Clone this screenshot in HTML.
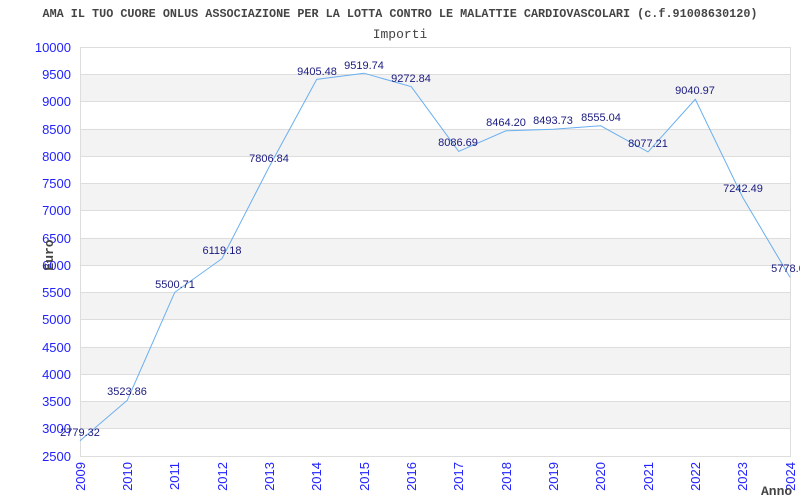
<!DOCTYPE html>
<html><head><meta charset="utf-8"><style>
html,body{margin:0;padding:0;background:#fff;}
svg{display:block;}
</style></head><body>
<svg width="800" height="500" xmlns="http://www.w3.org/2000/svg">
<rect width="800" height="500" fill="#fff"/>
<text x="400" y="17" text-anchor="middle" font-family="Liberation Mono, monospace" font-size="11.8" font-weight="bold" fill="#444">AMA IL TUO CUORE ONLUS ASSOCIAZIONE PER LA LOTTA CONTRO LE MALATTIE CARDIOVASCOLARI (c.f.91008630120)</text>
<text x="400" y="38" text-anchor="middle" font-family="Liberation Mono, monospace" font-size="13" fill="#444">Importi</text>
<g fill="#f3f3f3">
<rect x="81" y="74.3" width="709" height="27.3"/>
<rect x="81" y="128.9" width="709" height="27.3"/>
<rect x="81" y="183.4" width="709" height="27.3"/>
<rect x="81" y="237.9" width="709" height="27.3"/>
<rect x="81" y="292.4" width="709" height="27.3"/>
<rect x="81" y="346.9" width="709" height="27.3"/>
<rect x="81" y="401.5" width="709" height="27.3"/>
</g>
<g stroke="#ddd" stroke-width="1">
<line x1="81" x2="790" y1="47.5" y2="47.5"/><line x1="81" x2="790" y1="74.5" y2="74.5"/><line x1="81" x2="790" y1="101.5" y2="101.5"/><line x1="81" x2="790" y1="129.5" y2="129.5"/><line x1="81" x2="790" y1="156.5" y2="156.5"/><line x1="81" x2="790" y1="183.5" y2="183.5"/><line x1="81" x2="790" y1="210.5" y2="210.5"/><line x1="81" x2="790" y1="238.5" y2="238.5"/><line x1="81" x2="790" y1="265.5" y2="265.5"/><line x1="81" x2="790" y1="292.5" y2="292.5"/><line x1="81" x2="790" y1="319.5" y2="319.5"/><line x1="81" x2="790" y1="347.5" y2="347.5"/><line x1="81" x2="790" y1="374.5" y2="374.5"/><line x1="81" x2="790" y1="401.5" y2="401.5"/><line x1="81" x2="790" y1="428.5" y2="428.5"/><line x1="81" x2="790" y1="456.5" y2="456.5"/>
<line x1="80.5" x2="80.5" y1="47" y2="457"/><line x1="790.5" x2="790.5" y1="47" y2="457"/>
</g>
<g font-family="Liberation Sans, sans-serif" font-size="13" fill="#2222ff" text-anchor="end">
<text x="71" y="52">10000</text><text x="71" y="79">9500</text><text x="71" y="106">9000</text><text x="71" y="134">8500</text><text x="71" y="161">8000</text><text x="71" y="188">7500</text><text x="71" y="215">7000</text><text x="71" y="243">6500</text><text x="71" y="270">6000</text><text x="71" y="297">5500</text><text x="71" y="324">5000</text><text x="71" y="352">4500</text><text x="71" y="379">4000</text><text x="71" y="406">3500</text><text x="71" y="433">3000</text><text x="71" y="461">2500</text>
</g>
<g font-family="Liberation Sans, sans-serif" font-size="13" fill="#2222ff" text-anchor="end">
<text transform="translate(85,462) rotate(-90)">2009</text>
<text transform="translate(132,462) rotate(-90)">2010</text>
<text transform="translate(179,462) rotate(-90)">2011</text>
<text transform="translate(227,462) rotate(-90)">2012</text>
<text transform="translate(274,462) rotate(-90)">2013</text>
<text transform="translate(321,462) rotate(-90)">2014</text>
<text transform="translate(369,462) rotate(-90)">2015</text>
<text transform="translate(416,462) rotate(-90)">2016</text>
<text transform="translate(463,462) rotate(-90)">2017</text>
<text transform="translate(511,462) rotate(-90)">2018</text>
<text transform="translate(558,462) rotate(-90)">2019</text>
<text transform="translate(605,462) rotate(-90)">2020</text>
<text transform="translate(653,462) rotate(-90)">2021</text>
<text transform="translate(700,462) rotate(-90)">2022</text>
<text transform="translate(747,462) rotate(-90)">2023</text>
<text transform="translate(795,462) rotate(-90)">2024</text>
</g>
<text transform="translate(53,255) rotate(-90)" text-anchor="middle" font-family="Liberation Mono, monospace" font-size="13" font-weight="bold" fill="#444">Euro</text>
<text x="761" y="495" font-family="Liberation Mono, monospace" font-size="13" font-weight="bold" fill="#444">Anno</text>
<polyline fill="none" stroke="#6aaff0" stroke-width="1" points="80,440.8 127.3,400.2 174.7,292.4 222,258.6 269.3,166.6 316.7,79.4 364,73.2 411.3,86.7 458.7,151.4 506,130.8 553.3,129.2 600.7,125.8 648,151.9 695.3,99.3 742.7,197.4 790,277.2"/>
<g font-family="Liberation Sans, sans-serif" font-size="11" fill="#1a1a80" text-anchor="middle">
<text x="80" y="436">2779.32</text><text x="127" y="395">3523.86</text><text x="175" y="288">5500.71</text><text x="222" y="254">6119.18</text><text x="269" y="162">7806.84</text><text x="317" y="75">9405.48</text><text x="364" y="69">9519.74</text><text x="411" y="82">9272.84</text><text x="458" y="146">8086.69</text><text x="506" y="126">8464.20</text><text x="553" y="124">8493.73</text><text x="601" y="121">8555.04</text><text x="648" y="147">8077.21</text><text x="695" y="94">9040.97</text><text x="743" y="192">7242.49</text><text x="788" y="272">5778.0</text>
</g>
</svg>
</body></html>
